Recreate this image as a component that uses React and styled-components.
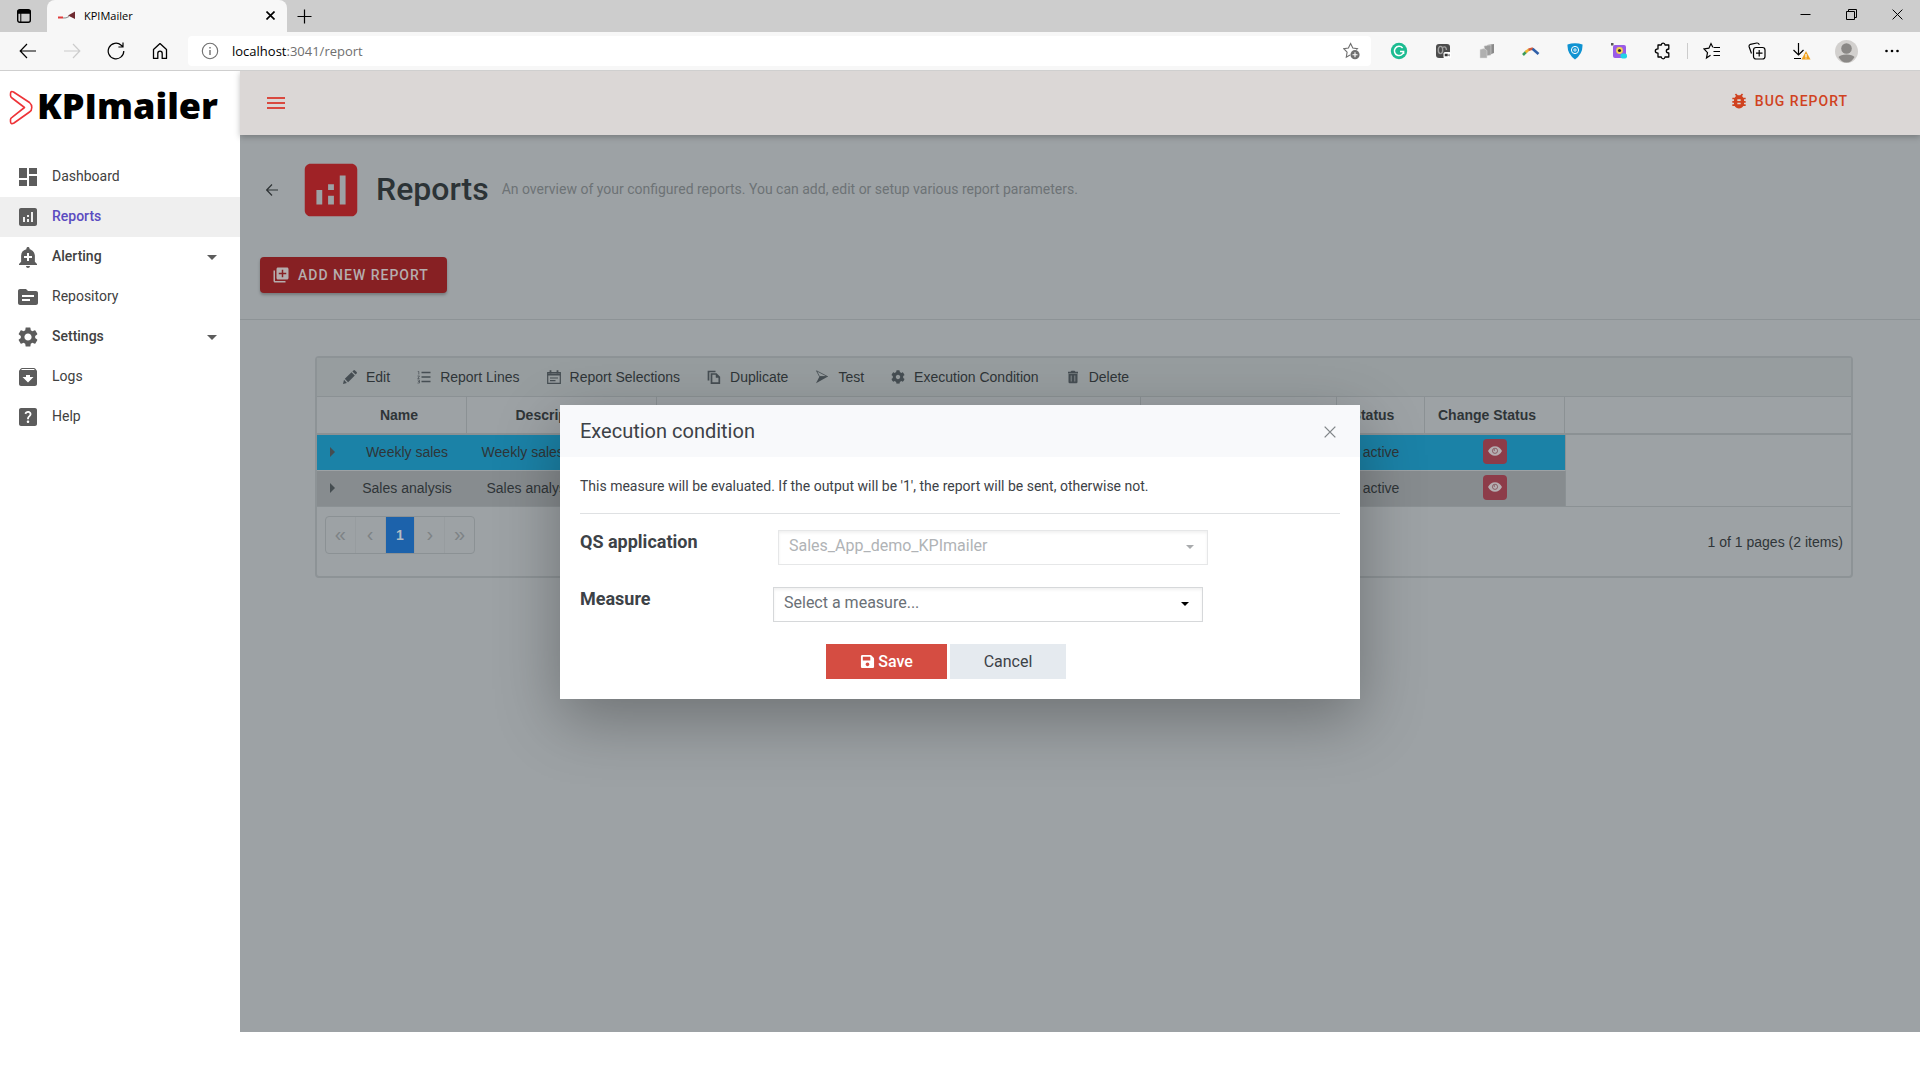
import React from "react";
import styled, { createGlobalStyle } from "styled-components";
import {
  MdAddAlert,
  MdAddToPhotos,
  MdAnalytics,
  MdArchive,
  MdArrowDropDown,
  MdBugReport,
  MdDashboard,
  MdHelpCenter,
  MdMenu,
  MdSettings,
  MdSource,
} from "react-icons/md";
import { FaCog, FaSave } from "react-icons/fa";

const navItems = [
  { label: "Dashboard", icon: MdDashboard },
  { label: "Reports", icon: MdAnalytics, active: true },
  { label: "Alerting", icon: MdAddAlert, group: true },
  { label: "Repository", icon: MdSource },
  { label: "Settings", icon: MdSettings, group: true },
  { label: "Logs", icon: MdArchive },
  { label: "Help", icon: MdHelpCenter },
];

const line = { fill: "none", stroke: "currentColor" };

const BackIcon = () => (
  <svg width="18" height="18" viewBox="0 0 18 18" {...line} strokeWidth="1.2">
    <path d="M17 9H1.5M8 2L1.2 9L8 16" />
  </svg>
);

const ReloadIcon = () => (
  <svg width="18" height="18" viewBox="0 0 18 18" {...line} strokeWidth="1.2">
    <path d="M16.8 9a7.8 7.8 0 1 1-2.6-5.8L16 5M16 .6V5h-4.6" />
  </svg>
);

const HomeIcon = () => (
  <svg width="18" height="18" viewBox="0 0 18 18" {...line} strokeWidth="1.3">
    <path d="M2.5 7.6L9 1.6l6.5 6v8.8h-4.3v-5a2.2 2.2 0 0 0-4.4 0v5H2.5z" strokeLinejoin="round" />
  </svg>
);

const InfoIcon = () => (
  <svg width="18" height="18" viewBox="0 0 18 18" {...line} strokeWidth="1.1">
    <circle cx="9" cy="9" r="7.7" />
    <path d="M9 8v5M9 5v1.5" strokeWidth="1.4" />
  </svg>
);

const StarAddIcon = () => (
  <svg width="18" height="18" viewBox="0 0 18 18" {...line} strokeWidth="1.1">
    <path d="M7 13L3.3 15.2l.8-5L.8 6.700l4.600-.7L7.600 1.600L9.800 6l4.600.7-1 1" />
    <circle cx="12" cy="12.7" r="4.6" fill="currentColor" stroke="none" />
    <path d="M12 10.2v5M9.5 12.7h5" stroke="#fff" />
  </svg>
);

const GrammarIcon = () => (
  <svg width="18" height="18" viewBox="0 0 18 18" fill="none">
    <circle cx="9" cy="9" r="8.2" fill="#1cbc91" />
    <path d="M12.6 6A4.6 4.6 0 1 0 13.6 9.5H10M13.6 9.5v2.6" stroke="#fff" strokeWidth="1.5" />
  </svg>
);

const RecorderIcon = () => (
  <svg width="18" height="18" viewBox="0 0 18 18" fill="none">
    <rect x="2" y="2" width="14" height="14" rx="3" fill="#4c4c4c" />
    <ellipse cx="6.5" cy="8" rx="2.2" ry="3.6" stroke="#a0a0a0" strokeWidth="1.4" />
    <path d="M8.5 5.5Q12 3.500 12.500 8" stroke="#a0a0a0" strokeWidth="1.4" />
    <rect x="9.5" y="10" width="7.5" height="6.5" rx="1.5" fill="#fff" />
    <path d="M10.7 11.700h3v2.600h-3zM14 13l1.500-1v2.500z" fill="#333" />
  </svg>
);

const StackIcon = () => (
  <svg width="18" height="18" viewBox="0 0 18 18">
    <path d="M9 3l7-1v9l-5 2z" fill="#8a8a8a" />
    <path d="M6 4l7-1v10l-5 1z" fill="#9c9c9c" stroke="#ddd" strokeWidth=".5" />
    <path d="M2 7.500l4-1 3 2V16H2z" fill="#b0b0b0" stroke="#ddd" strokeWidth=".5" />
  </svg>
);

const ArcIcon = () => (
  <svg width="18" height="18" viewBox="0 0 18 18" fill="none" strokeWidth="2.6">
    <path d="M1 13L4.500 9.500" stroke="#3a9a5a" />
    <path d="M3.500 10.300L7 7.500" stroke="#f2b632" />
    <path d="M6.500 7.700L11 6.500" stroke="#d65a3c" />
    <path d="M10.500 6.700L16.500 12" stroke="#2f5fa8" />
  </svg>
);

const ShieldIcon = () => (
  <svg width="18" height="18" viewBox="0 0 18 18" fill="none">
    <path d="M1.500 2.500q7.500-2.600 15 0q.5 9.500-7.500 15Q1 12 1.500 2.500z" fill="#0f93d2" />
    <circle cx="9" cy="8" r="3.6" stroke="#fff" />
    <path d="M7 8h4M9 6v4" stroke="#cdeafa" />
  </svg>
);

const CameraIcon = () => (
  <svg width="18" height="18" viewBox="0 0 18 18">
    <rect x="3" y="3" width="13" height="13" rx="2" fill="#9a5ce6" />
    <path d="M1 1h2.500v2.500H1z" fill="#555" />
    <circle cx="9.5" cy="8.5" r="3.4" fill="#f8d24c" />
    <circle cx="9.5" cy="8.5" r="1.6" fill="#2a2230" />
    <rect x="10.500" y="11.500" width="6.500" height="5" rx="2" fill="#22d3e6" />
  </svg>
);

const PuzzleIcon = () => (
  <svg width="18" height="18" viewBox="0 0 18 18" {...line} strokeWidth="1.3">
    <path
      d="M4 3h3.300q.2-1.900 1.900-1.900T11 3h3.800v4q-2.500.1-2.500 2t2.500 2v4H11q-.2 1.900-1.800 1.900T7.300 15H4v-3.900Q1.300 11 1.300 9T4 6.900z"
      strokeLinejoin="round"
    />
  </svg>
);

const FavoritesIcon = () => (
  <svg width="18" height="18" viewBox="0 0 18 18" {...line} strokeWidth="1.2">
    <path d="M7.5 13.200L3.500 16l1-5.400L1 6.900l4.900-.7L8 1.600l1.800 3.600M10.500 5.500H17M10.500 9.500H17M10.500 13.500H17" />
  </svg>
);

const CollectionsIcon = () => (
  <svg width="18" height="18" viewBox="0 0 18 18" {...line} strokeWidth="1.2">
    <rect x="5.5" y="5.5" width="11.500" height="11.500" rx="2.500" />
    <path d="M11.200 8v6.500M8 11.200h6.500M3.500 11.500L1.200 5q-.6-2 1.200-2.700L8.800 1q1.700-.2 2.600 1.800" />
  </svg>
);

const DownloadIcon = () => (
  <svg width="18" height="18" viewBox="0 0 18 18" {...line} strokeWidth="1.2">
    <path d="M5.5 1v12M.5 8l5 5 5-5M1 16.500h7" />
    <path d="M13 9l4.500 8.500h-9z" fill="#f0a01a" stroke="none" />
    <path d="M13 12v3M13 15.600v1" stroke="#fff" />
  </svg>
);

const AvatarIcon = () => (
  <svg width="23" height="23" viewBox="0 0 23 23">
    <circle cx="11.5" cy="11.5" r="11.5" fill="#d2d0ce" />
    <circle cx="11.5" cy="8.5" r="5.3" fill="#8a8886" />
    <path d="M3.5 17q2-2.500 8-2.500t8 2.500q-3 5.500-8 5.500t-8-5.500z" fill="#8a8886" />
  </svg>
);

const DotsIcon = () => (
  <svg width="18" height="18" viewBox="0 0 18 18" fill="currentColor">
    <circle cx="3.5" cy="9" r="1.3" />
    <circle cx="9" cy="9" r="1.3" />
    <circle cx="14.5" cy="9" r="1.3" />
  </svg>
);

const TabsIcon = () => (
  <svg width="14" height="14" viewBox="0 0 14 14" {...line}>
    <rect x=".7" y=".7" width="12.6" height="12.6" rx="2" strokeWidth="1.4" />
    <path d="M1 1.500h12v2.700H1z" fill="currentColor" />
    <path d="M3.800 4v9" />
  </svg>
);

const FaviconIcon = () => (
  <svg width="17" height="10" viewBox="0 0 17 10">
    <path d="M10 5.500L17 1.500v7.500z" fill="#6e2a30" />
    <path d="M0 6.500h5v2H0z" fill="#e03c3c" />
    <path d="M5 8q3 .5 6-1.500" stroke="#888" fill="none" />
  </svg>
);

const CrossIcon = ({ size = 11, weight = 1.2 }) => (
  <svg width={size} height={size} viewBox="0 0 11 11" {...line} strokeWidth={weight}>
    <path d="M.6.6l9.800 9.800M10.400.6L.6 10.400" />
  </svg>
);

const PlusIcon = () => (
  <svg width="15" height="15" viewBox="0 0 15 15" {...line} strokeWidth="1.2">
    <path d="M7.500.5v14M.5 7.500h14" />
  </svg>
);

const MinimizeIcon = () => (
  <svg width="11" height="11" viewBox="0 0 11 11" {...line}>
    <path d="M.5 5.500h10" />
  </svg>
);

const RestoreIcon = () => (
  <svg width="11" height="11" viewBox="0 0 11 11" {...line}>
    <path d="M.5 2.500h8v8h-8zM2.500 2.500v-2h8v8h-2" />
  </svg>
);

const ChevronLogo = () => (
  <svg width="24" height="35" viewBox="0 0 24 35" fill="none" stroke="#ee3338" strokeWidth="1.6">
    <path
      d="M1.500 4q0-3.500 3-2L20.500 12.500q2.300 2 2.300 5t-2.300 4.500L5 33q-3.500 1.800-3.500-1.500v-2q0-1.200 1.500-2.200l12.500-9.800L3 8q-1.500-1-1.500-2.500z"
      strokeLinejoin="round"
    />
  </svg>
);

const SmallBackIcon = () => (
  <svg width="12" height="12" viewBox="0 0 12 12" {...line} strokeWidth="1.2">
    <path d="M12 6H1M6 .5L.7 6 6 11.500" />
  </svg>
);

const PencilIcon = () => (
  <svg width="14" height="14" viewBox="0 0 14 14" fill="currentColor">
    <path d="M0 14l1-4.300L3.900 13zM1.800 8.800l6.700-6.600 3.300 3.300-6.700 6.700zM9.400 1.400L10.400.4q.8-.7 1.600 0l1.600 1.600q.8.8 0 1.600l-1 1z" />
  </svg>
);

const LinesIcon = () => (
  <svg width="14" height="14" viewBox="0 0 14 14" {...line} strokeWidth="1.3">
    <path d="M4.500 2.500H13.500M4.500 7H13.500M4.500 11.500H13.500" />
    <path d="M.8 1.500h1v3M.5 6h2L.8 8.500h1.700M.5 10h2v3H.5M1 11.500h1.500" strokeWidth=".7" />
  </svg>
);

const CalendarIcon = () => (
  <svg width="14" height="14" viewBox="0 0 14 14" {...line} strokeWidth="1.2">
    <path d="M.7 2.700h12.600v10.600H.7zM3 8h8M3 10.700h5.500" />
    <path d="M.7 4.500h12.600M3.500.3v3M10.500.3v3" strokeWidth="1.8" />
  </svg>
);

const CopyIcon = () => (
  <svg width="14" height="14" viewBox="0 0 14 14" {...line} strokeWidth="1.7">
    <path d="M1.500 10.500v-9h7M4.500 4h4.700L12.300 7v6.200H4.500z" />
    <path d="M9 4v3.500h3.300z" fill="currentColor" strokeWidth=".5" />
  </svg>
);

const SendIcon = () => (
  <svg width="14" height="14" viewBox="0 0 14 14">
    <path d="M1.500.8L12.500 6.500H4.500z" {...line} strokeWidth=".8" />
    <path d="M4.500 6.500h8.500L1 13.200z" fill="currentColor" />
  </svg>
);

const TrashIcon = () => (
  <svg width="14" height="14" viewBox="0 0 14 14">
    <path d="M2 1.800h2.500L5.500.8h3l1 1H12V3.500H2zM2.500 4h9v8q0 1.200-1.200 1.200H3.700q-1.200 0-1.200-1.200z" fill="currentColor" />
    <path d="M5.2 5.500v6M8.800 5.500v6" stroke="#8d9395" strokeWidth=".9" />
  </svg>
);

const EyeIcon = () => (
  <svg width="14" height="10" viewBox="0 0 14 10">
    <path d="M0 5Q2.500.3 7 .3T14 5q-2.500 4.700-7 4.700T0 5z" fill="#b5aeb1" />
    <circle cx="7" cy="4.8" r="2.6" fill="none" stroke="#7d4c55" strokeWidth=".8" />
    <circle cx="6.3" cy="4" r=".7" fill="#7d4c55" />
  </svg>
);

const CaretIcon = () => (
  <svg width="8" height="4" viewBox="0 0 8 4">
    <path d="M0 0h8L4 4z" fill="currentColor" />
  </svg>
);

const extensions = [
  ["Writing assistant", GrammarIcon],
  ["Recorder", RecorderIcon],
  ["Stack", StackIcon],
  ["Converter", ArcIcon],
  ["Privacy", ShieldIcon],
  ["Screen capture", CameraIcon],
  ["Extensions", PuzzleIcon],
];

const browserTools = [
  ["Favorites", FavoritesIcon],
  ["Collections", CollectionsIcon],
  ["Downloads", DownloadIcon],
  ["Profile", AvatarIcon],
  ["Settings and more", DotsIcon],
];

const gridActions = [
  ["Edit", PencilIcon],
  ["Report Lines", LinesIcon],
  ["Report Selections", CalendarIcon],
  ["Duplicate", CopyIcon],
  ["Test", SendIcon],
  ["Execution Condition", FaCog],
  ["Delete", TrashIcon],
];

const reports = [
  { name: "Weekly sales", description: "Weekly sales by all stores", selected: true },
  { name: "Sales analysis", description: "Sales analysis by region", selected: false },
];

const BrowserBar = () => (
  <header>
    <TabStrip>
      <TabsButton aria-label="Tab actions">
        <TabsIcon />
      </TabsButton>
      <Tab>
        <FaviconIcon />
        <span>KPIMailer</span>
        <button aria-label="Close tab">
          <CrossIcon size={9} weight={2} />
        </button>
      </Tab>
      <NewTab aria-label="New tab">
        <PlusIcon />
      </NewTab>
      <WindowControls>
        <button aria-label="Minimize">
          <MinimizeIcon />
        </button>
        <button aria-label="Restore">
          <RestoreIcon />
        </button>
        <button aria-label="Close">
          <CrossIcon weight={1} />
        </button>
      </WindowControls>
    </TabStrip>
    <AddressRow>
      <ToolButton aria-label="Back">
        <BackIcon />
      </ToolButton>
      <ToolButton aria-label="Forward" disabled $flip>
        <BackIcon />
      </ToolButton>
      <ToolButton aria-label="Reload">
        <ReloadIcon />
      </ToolButton>
      <ToolButton aria-label="Home">
        <HomeIcon />
      </ToolButton>
      <AddressBar>
        <InfoIcon />
        <p>
          <b>localhost</b>:3041/report
        </p>
        <StarAddIcon />
      </AddressBar>
      {extensions.map(([label, Icon]) => (
        <ToolButton key={label} aria-label={label}>
          <Icon />
        </ToolButton>
      ))}
      <Separator />
      {browserTools.map(([label, Icon]) => (
        <ToolButton key={label} aria-label={label} $wide>
          <Icon />
        </ToolButton>
      ))}
    </AddressRow>
  </header>
);

const Sidebar = () => (
  <Side>
    <Logo>
      <ChevronLogo />
      <span>KPImailer</span>
    </Logo>
    <nav>
      {navItems.map(({ label, icon: Icon, active, group }) => (
        <NavLink key={label} href="#" $active={active} $group={group}>
          <Icon size={24} />
          <span>{label}</span>
          {group && <MdArrowDropDown size={24} />}
        </NavLink>
      ))}
    </nav>
  </Side>
);

const ReportGrid = () => (
  <Grid>
    <GridToolbar>
      {gridActions.map(([label, Icon]) => (
        <GridAction key={label}>
          <Icon size={14} />
          {label}
        </GridAction>
      ))}
    </GridToolbar>
    <Table>
      <colgroup>
        <col width="30" />
        <col width="120" />
        <col width="190" />
        <col width="484" />
        <col width="196" />
        <col width="88" />
        <col width="140" />
        <col />
      </colgroup>
      <thead>
        <tr>
          <th className="expander" />
          <th>Name</th>
          <th>Description</th>
          <th>Recipients</th>
          <th>Format</th>
          <th>Status</th>
          <th>Change Status</th>
          <th className="rest" />
        </tr>
      </thead>
      <tbody>
        {reports.map((report) => (
          <Row key={report.name} $selected={report.selected}>
            <td>
              <Expander aria-label="Expand row" />
            </td>
            <td>{report.name}</td>
            <td>{report.description}</td>
            <td />
            <td />
            <td>active</td>
            <td>
              <StatusButton aria-label="Change status">
                <EyeIcon />
              </StatusButton>
            </td>
            <td className="rest" />
          </Row>
        ))}
      </tbody>
    </Table>
    <GridFooter>
      <Pager>
        <button aria-label="First page" disabled>
          «
        </button>
        <button aria-label="Previous page" disabled>
          ‹
        </button>
        <button className="current">1</button>
        <button aria-label="Next page" disabled>
          ›
        </button>
        <button aria-label="Last page" disabled>
          »
        </button>
      </Pager>
      <span>1 of 1 pages (2 items)</span>
    </GridFooter>
  </Grid>
);

const ExecutionModal = () => (
  <Overlay>
    <Modal role="dialog" aria-labelledby="modal-title">
      <ModalHeader>
        <h2 id="modal-title">Execution condition</h2>
        <button aria-label="Close">
          <CrossIcon size={12} />
        </button>
      </ModalHeader>
      <ModalBody>
        <p>
          This measure will be evaluated. If the output will be '1', the report
          will be sent, otherwise not.
        </p>
        <hr />
        <Field $labelWidth={198}>
          <label htmlFor="application">QS application</label>
          <SelectBox $disabled>
            <select id="application" disabled>
              <option>Sales_App_demo_KPImailer</option>
            </select>
            <CaretIcon />
          </SelectBox>
        </Field>
        <Field $labelWidth={193}>
          <label htmlFor="measure">Measure</label>
          <SelectBox>
            <select id="measure">
              <option>Select a measure...</option>
            </select>
            <CaretIcon />
          </SelectBox>
        </Field>
        <ModalActions>
          <ModalButton $primary>
            <FaSave size={15} />
            Save
          </ModalButton>
          <ModalButton>Cancel</ModalButton>
        </ModalActions>
      </ModalBody>
    </Modal>
  </Overlay>
);

const App = () => {
  return (
    <Window>
      <GlobalStyle />
      <BrowserBar />
      <Page>
        <Sidebar />
        <Main>
          <TopBar>
            <MenuButton aria-label="Toggle menu">
              <MdMenu size={24} />
            </MenuButton>
            <BugButton>
              <MdBugReport size={20} />
              BUG REPORT
            </BugButton>
          </TopBar>
          <PageHeader>
            <Title>
              <button aria-label="Go back">
                <SmallBackIcon />
              </button>
              <MdAnalytics size={70} />
              <h1>Reports</h1>
              <p>
                An overview of your configured reports. You can add, edit or
                setup various report parameters.
              </p>
            </Title>
            <AddButton>
              <MdAddToPhotos size={18} />
              ADD NEW REPORT
            </AddButton>
          </PageHeader>
          <ReportGrid />
        </Main>
        <ExecutionModal />
      </Page>
    </Window>
  );
};

export default App;

const GlobalStyle = createGlobalStyle`
  * {
    box-sizing: border-box;
  }
  body {
    margin: 0;
    background-color: white;
    font-family: Roboto, sans-serif;
    font-size: 14px;
  }
  button {
    padding: 0;
    border: none;
    background: none;
    color: inherit;
    font: inherit;
  }
  h1, h2, p {
    margin: 0;
  }
`;

const Window = styled.div`
  display: flex;
  flex-direction: column;
  min-height: 100vh;
  padding-bottom: 48px;
`;

const TabStrip = styled.div`
  display: flex;
  height: 32px;
  background-color: #cdcdcd;
  color: black;
`;

const TabsButton = styled.button`
  display: flex;
  align-items: center;
  justify-content: center;
  width: 47px;
`;

const Tab = styled.div`
  display: flex;
  align-items: center;
  width: 240px;
  padding: 0 12px 2px 11px;
  background-color: #f7f7f7;
  border-radius: 8px 8px 0 0;
  font-family: "Open Sans", sans-serif;
  font-size: 11px;

  span {
    flex: 1;
    margin-left: 9px;
  }
`;

const NewTab = styled.button`
  display: flex;
  align-items: center;
  justify-content: center;
  width: 34px;
`;

const WindowControls = styled.div`
  display: flex;
  height: 28px;
  margin-left: auto;

  button {
    display: flex;
    align-items: center;
    justify-content: center;
    width: 46px;
  }
`;

const AddressRow = styled.div`
  display: flex;
  align-items: center;
  height: 39px;
  padding: 0 6px;
  background-color: #f7f7f7;
  border-bottom: 1px solid #cfcfcf;
  color: black;
`;

const ToolButton = styled.button`
  display: flex;
  flex-shrink: 0;
  align-items: center;
  justify-content: center;
  width: ${({ $wide }) => ($wide ? "45px" : "44px")};
  height: 30px;

  &:disabled {
    color: #cccccc;
  }
  svg {
    transform: ${({ $flip }) => ($flip ? "rotate(180deg)" : "none")};
  }
`;

const AddressBar = styled.div`
  display: flex;
  flex: 1;
  align-items: center;
  height: 30px;
  margin: 0 6px;
  padding: 0 10px 0 13px;
  background-color: white;
  border-radius: 4px;
  color: #6f6f6f;
  font-family: "Open Sans", sans-serif;
  font-size: 13px;

  p {
    flex: 1;
    margin-left: 13px;
  }
  b {
    color: black;
    font-weight: 400;
  }
`;

const Separator = styled.span`
  width: 1px;
  height: 16px;
  margin: 0 1px 0 2px;
  background-color: #cccccc;
`;

const Page = styled.div`
  position: relative;
  display: flex;
  flex: 1;
  overflow: hidden;
`;

const Side = styled.aside`
  width: 240px;
  background-color: white;
  box-shadow: 0 0 4px rgba(0, 0, 0, 0.2);
`;

const Logo = styled.div`
  display: flex;
  align-items: center;
  gap: 4px;
  height: 72px;
  margin-bottom: 14px;
  padding-left: 9px;
  color: black;
  font-family: "Open Sans", sans-serif;
  font-size: 36px;
  font-weight: 800;

  span {
    padding-bottom: 4px;
  }
`;

const NavLink = styled.a`
  display: flex;
  align-items: center;
  height: 40px;
  padding: 0 16px;
  background-color: ${({ $active }) => ($active ? "#efefef" : "white")};
  color: ${({ $active }) => ($active ? "#5b4bc0" : "#414141")};
  font-weight: ${({ $active, $group }) => ($active || $group ? 500 : 400)};
  text-decoration: none;

  span {
    flex: 1;
    margin-left: 12px;
    padding-bottom: 2px;
  }
  svg {
    color: #5c5c5c;
  }
`;

const Main = styled.main`
  flex: 1;
  min-width: 0;
  background-color: #9da2a5;
`;

const TopBar = styled.div`
  display: flex;
  align-items: center;
  justify-content: space-between;
  height: 64px;
  padding: 0 72px 0 24px;
  background-color: #dbd7d6;
  box-shadow: 0 2px 6px rgba(0, 0, 0, 0.25);
`;

const MenuButton = styled.button`
  display: flex;
  color: #d9493f;
`;

const BugButton = styled.button`
  display: flex;
  align-items: center;
  gap: 6px;
  padding-bottom: 4px;
  color: #d0421f;
  font-weight: 500;
  letter-spacing: 1px;
`;

const PageHeader = styled.section`
  padding: 20px;
  padding-bottom: 26px;
  border-bottom: 1px solid #8d9396;
`;

const Title = styled.div`
  display: flex;
  align-items: center;
  height: 70px;
  margin-bottom: 32px;
  padding-left: 6px;

  button {
    display: flex;
    color: #2f3436;
  }
  svg:not(button svg) {
    margin: 0 10px 0 18px;
    color: #9f2226;
  }
  h1 {
    margin-right: 13px;
    padding-bottom: 2px;
    color: #2c3336;
    font-size: 32px;
    font-weight: 500;
  }
  p {
    padding-bottom: 2px;
    color: #6d7376;
  }
`;

const AddButton = styled.button`
  display: flex;
  align-items: center;
  gap: 8px;
  height: 36px;
  padding: 0 18px 0 12px;
  background-color: #872023;
  border-radius: 4px;
  box-shadow: 0 2px 3px rgba(0, 0, 0, 0.25);
  color: #b5adae;
  font-weight: 500;
  letter-spacing: 1px;
`;

const Grid = styled.section`
  margin: 36px 67px 0 75px;
  border: 2px solid #8d9396;
  border-radius: 4px;
  color: #2f3538;
  font-family: "Liberation Sans", sans-serif;
`;

const GridToolbar = styled.div`
  display: flex;
  gap: 27px;
  height: 39px;
  padding-left: 26px;
  background-color: #979d9f;
  border-bottom: 1px solid #8b9194;
`;

const GridAction = styled.button`
  display: flex;
  align-items: center;
  gap: 9px;

  svg {
    color: #464e53;
  }
`;

const Table = styled.table`
  width: 100%;
  border-spacing: 0;
  table-layout: fixed;

  th {
    height: 38px;
    padding: 0 15px 0 0;
    border-right: 1px solid #8b9194;
    border-bottom: 2px solid #8b9194;
    white-space: nowrap;
  }
  td {
    height: 36px;
    padding: 0 0 2px;
    overflow: hidden;
    text-align: center;
    white-space: nowrap;
  }
  .expander,
  th.rest {
    border-right: none;
  }
  td.rest {
    border-left: 1px solid #8b9194;
    border-bottom-color: #9da2a5;
    background-color: #9da2a5;
  }
  tr:last-child td.rest {
    border-bottom-color: #8b9194;
  }
`;

const Row = styled.tr`
  td {
    background-color: ${({ $selected }) => ($selected ? "#1b82a7" : "#878c8f")};
    border-bottom: 1px solid ${({ $selected }) => ($selected ? "#9da2a5" : "#8b9194")};
  }
`;

const Expander = styled.button`
  display: block;
  margin-left: 13px;
  border: 5px solid transparent;
  border-right: none;
  border-left-color: #454d51;
`;

const StatusButton = styled.button`
  display: inline-flex;
  align-items: center;
  justify-content: center;
  width: 24px;
  height: 25px;
  padding-bottom: 2px;
  background-color: #8d3c49;
  border-radius: 4px;
  vertical-align: middle;
`;

const GridFooter = styled.div`
  display: flex;
  align-items: center;
  justify-content: space-between;
  height: 69px;
  padding: 0 8px;
`;

const Pager = styled.div`
  display: flex;
  width: 150px;
  height: 38px;
  margin-bottom: 14px;
  border: 1px solid #8b9194;
  border-radius: 4px;

  button {
    flex: 1;
    border-right: 1px solid #979c9f;
    color: #7d8386;
    font-size: 20px;
  }
  button:last-child {
    border-right: none;
  }
  .current {
    background-color: #1c62ab;
    color: #b4bcc4;
    font-size: 14px;
    font-weight: 700;
  }
`;

const Overlay = styled.div`
  position: absolute;
  inset: 0;
  display: flex;
  align-items: center;
  justify-content: center;
`;

const Modal = styled.div`
  width: 800px;
  background-color: white;
  box-shadow: 0 20px 60px rgba(0, 0, 0, 0.3);
  color: #3d4247;
`;

const ModalHeader = styled.div`
  display: flex;
  align-items: center;
  justify-content: space-between;
  height: 52px;
  padding: 0 24px 0 20px;
  background-color: #f8f9fb;

  h2 {
    font-size: 20px;
    font-weight: 400;
  }
  button {
    display: flex;
    padding-top: 2px;
    color: #808588;
  }
`;

const ModalBody = styled.div`
  padding: 20px;

  p {
    line-height: 18px;
  }
  hr {
    margin: 18px 0 16px;
    border: none;
    border-top: 1px solid #dfe1e3;
  }
`;

const Field = styled.div`
  display: flex;
  height: 57px;

  label {
    width: ${({ $labelWidth }) => $labelWidth}px;
    padding-top: 1px;
    font-size: 18px;
    font-weight: 700;
  }
`;

const SelectBox = styled.div`
  display: flex;
  align-items: center;
  width: 430px;
  height: 35px;
  padding: 0 13px 0 10px;
  border: 1px solid ${({ $disabled }) => ($disabled ? "#e6e7e8" : "#d6d8da")};
  box-shadow: inset 0 2px 3px rgba(0, 0, 0, 0.06);
  color: ${({ $disabled }) => ($disabled ? "#a9abad" : "#000000")};

  select {
    flex: 1;
    height: 33px;
    padding: 0 0 4px;
    border: none;
    background: none;
    appearance: none;
    color: ${({ $disabled }) => ($disabled ? "#b0b3b6" : "#6a7076")};
    font: 16px Roboto, sans-serif;
    opacity: 1;
  }
`;

const ModalActions = styled.div`
  display: flex;
  gap: 3px;
  padding-left: 246px;
`;

const ModalButton = styled.button`
  display: flex;
  align-items: center;
  justify-content: center;
  gap: 3px;
  width: ${({ $primary }) => ($primary ? "121px" : "116px")};
  height: 35px;
  background-color: ${({ $primary }) => ($primary ? "#d54d42" : "#e5eaef")};
  color: ${({ $primary }) => ($primary ? "white" : "#3d4247")};
  font-size: 16px;
  font-weight: ${({ $primary }) => ($primary ? 500 : 400)};
`;
